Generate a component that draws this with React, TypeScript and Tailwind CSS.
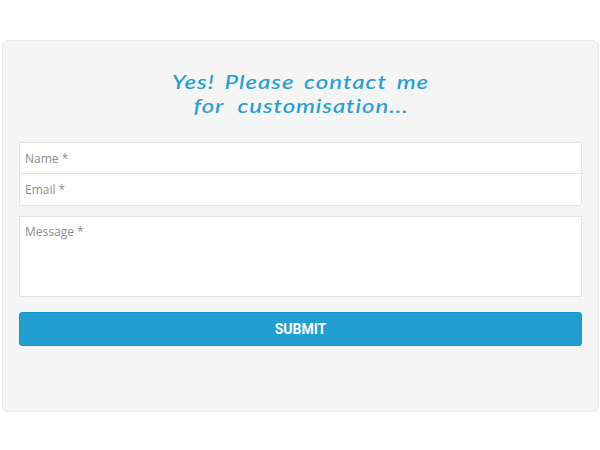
import React from "react";

const field =
  "block w-full resize-none border border-[#e3e3e3] bg-white px-[5px] text-[12px] text-[#333] outline-none placeholder:text-[#8c8c8c] placeholder:opacity-100 font-['Open_Sans',sans-serif]";

export default function App() {
  return (
    <main className="h-[450px] w-[600px] overflow-hidden bg-white pl-[2px] pt-10">
      <section className="h-[372px] w-[597px] rounded-[6px] border border-[#e9e9e9] bg-[#f5f5f5] px-4 pt-[28px] font-['Open_Sans',sans-serif]">
        <h1 className="h-[73px] scale-x-[1.2] text-center font-['Lato',sans-serif] text-[20px] font-medium italic leading-6 text-[#219fd3]">
          <span className="block whitespace-nowrap tracking-[0.85px] [word-spacing:2.5px]">Yes! Please contact me</span>
          <span className="block whitespace-nowrap pl-px tracking-[0.75px] [word-spacing:6px]">for customisation...</span>
        </h1>
        <form onSubmit={(e) => e.preventDefault()}>
          <input className={`${field} h-8 rounded-t-[1px]`} placeholder="Name *" />
          <input className={`${field} -mt-px h-[33px] rounded-b-[1px]`} placeholder="Email *" />
          <textarea className={`${field} mt-[10px] h-[81px] pt-[6px] leading-[18px]`} placeholder="Message *" />
          <button className="mt-[15px] block h-[34px] w-full rounded-[3px] border border-[#129acf] bg-[#219fd3] pt-px font-['Roboto',sans-serif] text-[14px] font-bold text-white">
            SUBMIT
          </button>
        </form>
      </section>
    </main>
  );
}
